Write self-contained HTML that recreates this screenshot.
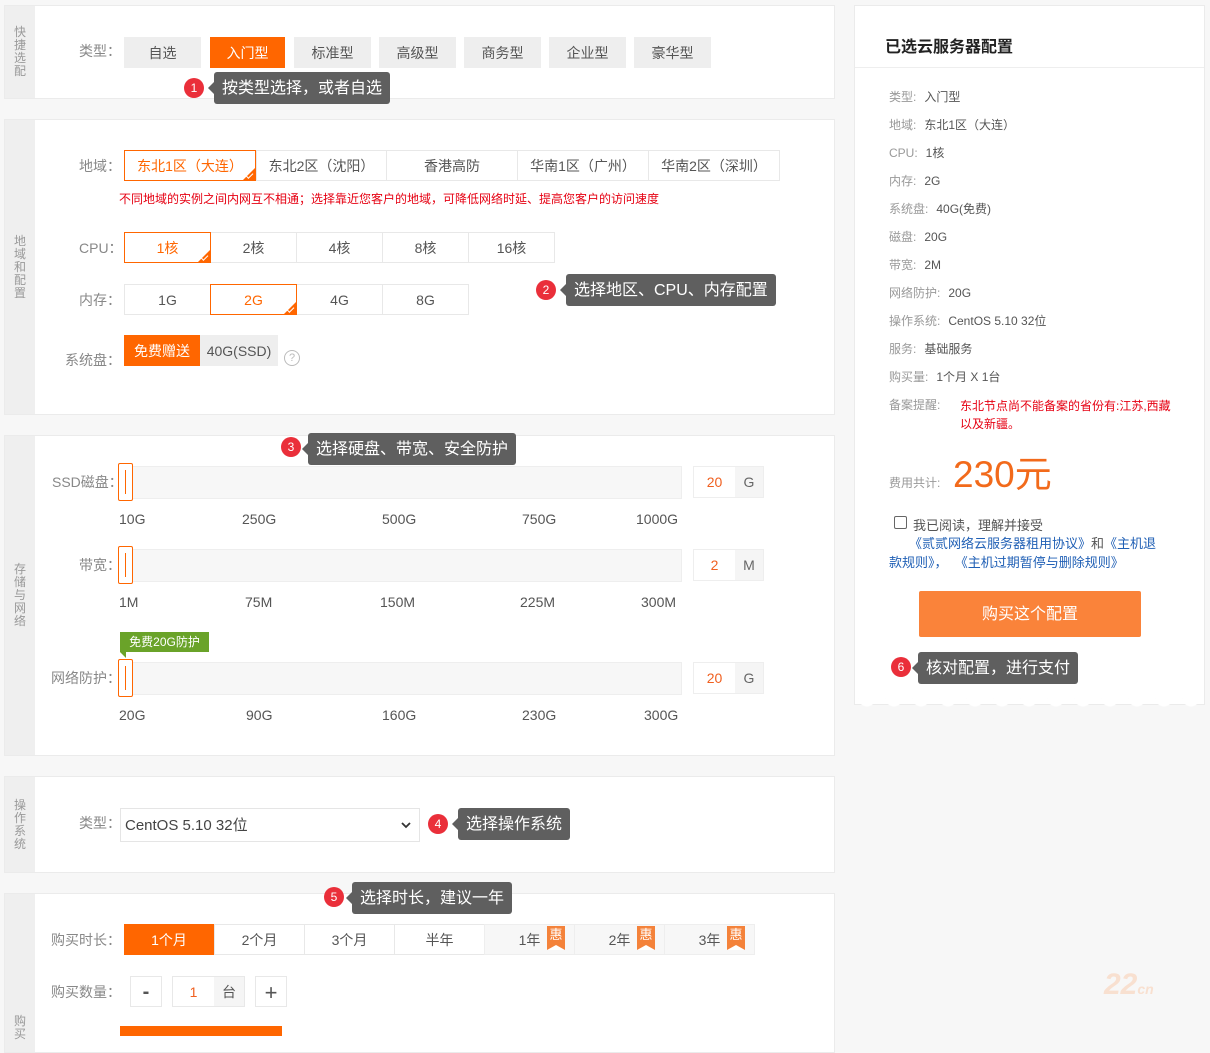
<!DOCTYPE html>
<html><head><meta charset="utf-8"><style>
*{margin:0;padding:0;box-sizing:border-box}
body{width:1210px;height:1032px;background:#f7f7f7;font-family:"Liberation Sans","Noto Sans CJK SC",sans-serif;position:relative;overflow:hidden;color:#555;font-size:14px}
.a{position:absolute}
.pn{position:absolute;left:4px;width:831px;background:#fff;border:1px solid #ebebeb}
.side{position:absolute;left:0;top:0;bottom:0;width:30px;background:#efefef;color:#999;font-size:12px;line-height:13px;display:flex;align-items:center;justify-content:center;text-align:center}
.side span{width:13px}
.lb{position:absolute;color:#888;font-size:14px;line-height:20px}
.b{position:absolute;height:31px;line-height:31px;text-align:center;font-size:14px;color:#555;border:1px solid #e8e8e8;background:#fff}
.g{background:#eee;border-color:#eee;color:#555}
.o{background:#ff6600;border-color:#ff6600;color:#fff}
.s{border-color:#ff6600;color:#ff6600;z-index:2}
.s:after{content:"";position:absolute;right:-1px;bottom:-1px;border-style:solid;border-width:0 0 14px 14px;border-color:transparent transparent #ff6600 transparent}
.s:before{content:"";position:absolute;right:2px;bottom:3px;width:6px;height:3px;border-left:1.5px solid #fff;border-bottom:1.5px solid #fff;transform:rotate(-45deg);z-index:3}
.bd{position:absolute;width:20px;height:20px;border-radius:50%;background:#ea2f3a;color:#fff;font-size:12px;line-height:20px;text-align:center}
.tp{position:absolute;height:32px;background:#5f5f5f;color:#fff;font-size:16px;line-height:34px;padding:0 8px;border-radius:3px;white-space:nowrap}
.tp:before{content:"";position:absolute;left:-6px;top:10px;border-style:solid;border-width:6px 6px 6px 0;border-color:transparent #5f5f5f transparent transparent}
.tr{position:absolute;left:118px;width:564px;height:33px;background:#f7f7f7;border:1px solid #eee}
.hd{position:absolute;left:118px;width:15px;height:38px;border:1px solid #ff6600;background:#fff;border-radius:2px}
.hd:after{content:"";position:absolute;left:6px;top:6px;width:1px;height:24px;background:#ff6600}
.sc{position:absolute;font-size:14px;color:#555}
.nb{position:absolute;left:693px;width:71px;height:32px;border:1px solid #eee;font-size:14px}
.nb i{font-style:normal;position:absolute;left:0;width:41px;text-align:center;line-height:30px;color:#f06020}
.nb u{text-decoration:none;position:absolute;left:41px;width:28px;height:30px;background:#f5f5f5;text-align:center;line-height:30px;color:#666}
.ri{position:absolute;left:889px;font-size:12px;color:#555;line-height:16px}
.ri b{font-weight:normal;color:#999;margin-right:8px}
.hui{position:absolute;top:1px;width:18px;height:24px;background:#f4823a;color:#fff;font-size:13px;line-height:18px;text-align:center}
.hui:after{content:"";position:absolute;left:0;bottom:0;border-style:solid;border-width:0 9px 5px 9px;border-color:transparent transparent #fff transparent}
</style></head><body>

<!-- panel 1 -->
<div class="pn" style="top:5px;height:94px"><div class="side"><span>快捷选配</span></div></div>
<div class="lb" style="left:79px;top:41px">类型：</div>
<div class="b g" style="left:124px;top:37px;width:77px">自选</div>
<div class="b o" style="left:210px;top:37px;width:75px">入门型</div>
<div class="b g" style="left:294px;top:37px;width:77px">标准型</div>
<div class="b g" style="left:379px;top:37px;width:77px">高级型</div>
<div class="b g" style="left:464px;top:37px;width:77px">商务型</div>
<div class="b g" style="left:549px;top:37px;width:77px">企业型</div>
<div class="b g" style="left:634px;top:37px;width:77px">豪华型</div>
<div class="bd" style="left:184px;top:78px">1</div>
<div class="tp" style="left:214px;top:72px">按类型选择，或者自选</div>

<!-- panel 2 -->
<div class="pn" style="top:119px;height:296px"><div class="side"><span>地域和配置</span></div></div>
<div class="lb" style="left:79px;top:156px">地域：</div>
<div class="b s" style="left:124px;top:150px;width:132px">东北1区（大连）</div>
<div class="b" style="left:256px;top:150px;width:131px">东北2区（沈阳）</div>
<div class="b" style="left:386px;top:150px;width:132px">香港高防</div>
<div class="b" style="left:517px;top:150px;width:132px">华南1区（广州）</div>
<div class="b" style="left:648px;top:150px;width:132px">华南2区（深圳）</div>
<div class="a" style="left:119px;top:190px;font-size:12px;color:#e60012">不同地域的实例之间内网互不相通；选择靠近您客户的地域，可降低网络时延、提高您客户的访问速度</div>
<div class="lb" style="left:79px;top:238px">CPU：</div>
<div class="b s" style="left:124px;top:232px;width:87px">1核</div>
<div class="b" style="left:210px;top:232px;width:87px">2核</div>
<div class="b" style="left:296px;top:232px;width:87px">4核</div>
<div class="b" style="left:382px;top:232px;width:87px">8核</div>
<div class="b" style="left:468px;top:232px;width:87px">16核</div>
<div class="lb" style="left:79px;top:290px">内存：</div>
<div class="b" style="left:124px;top:284px;width:87px">1G</div>
<div class="b s" style="left:210px;top:284px;width:87px">2G</div>
<div class="b" style="left:296px;top:284px;width:87px">4G</div>
<div class="b" style="left:382px;top:284px;width:87px">8G</div>
<div class="bd" style="left:536px;top:280px">2</div>
<div class="tp" style="left:566px;top:274px">选择地区、CPU、内存配置</div>
<div class="lb" style="left:65px;top:350px">系统盘：</div>
<div class="b o" style="left:124px;top:335px;width:76px">免费赠送</div>
<div class="b g" style="left:200px;top:335px;width:78px">40G(SSD)</div>
<div class="a" style="left:284px;top:350px;width:16px;height:16px;border:1px solid #bbb;border-radius:50%;color:#bbb;font-size:11px;line-height:14px;text-align:center">?</div>

<!-- panel 3 -->
<div class="pn" style="top:435px;height:321px"><div class="side"><span>存储与网络</span></div></div>
<div class="bd" style="left:281px;top:437px">3</div>
<div class="tp" style="left:308px;top:433px">选择硬盘、带宽、安全防护</div>
<div class="lb" style="left:52px;top:472px">SSD磁盘：</div>
<div class="tr" style="top:466px"></div><div class="hd" style="top:463px"></div>
<div class="nb" style="top:466px"><i>20</i><u>G</u></div>
<div class="sc" style="left:119px;top:511px">10G</div><div class="sc" style="left:242px;top:511px">250G</div><div class="sc" style="left:382px;top:511px">500G</div><div class="sc" style="left:522px;top:511px">750G</div><div class="sc" style="left:636px;top:511px">1000G</div>
<div class="lb" style="left:79px;top:555px">带宽：</div>
<div class="tr" style="top:549px"></div><div class="hd" style="top:546px"></div>
<div class="nb" style="top:549px"><i>2</i><u>M</u></div>
<div class="sc" style="left:119px;top:594px">1M</div><div class="sc" style="left:245px;top:594px">75M</div><div class="sc" style="left:380px;top:594px">150M</div><div class="sc" style="left:520px;top:594px">225M</div><div class="sc" style="left:641px;top:594px">300M</div>
<div class="a" style="left:120px;top:632px;width:89px;height:20px;background:#6aa329;color:#fff;font-size:12px;line-height:20px;text-align:center">免费20G防护</div>
<div class="a" style="left:120px;top:652px;border-style:solid;border-width:0 6px 6px 0;border-color:transparent #6aa329 transparent transparent"></div>
<div class="lb" style="left:51px;top:668px">网络防护：</div>
<div class="tr" style="top:662px"></div><div class="hd" style="top:659px"></div>
<div class="nb" style="top:662px"><i>20</i><u>G</u></div>
<div class="sc" style="left:119px;top:707px">20G</div><div class="sc" style="left:246px;top:707px">90G</div><div class="sc" style="left:382px;top:707px">160G</div><div class="sc" style="left:522px;top:707px">230G</div><div class="sc" style="left:644px;top:707px">300G</div>

<!-- panel 4 -->
<div class="pn" style="top:776px;height:97px"><div class="side"><span>操作系统</span></div></div>
<div class="lb" style="left:79px;top:813px">类型：</div>
<div class="a" style="left:120px;top:808px;width:300px;height:34px;border:1px solid #e5e5e5;font-size:15px;color:#444;line-height:34px;padding-left:4px">CentOS 5.10 32位<svg style="position:absolute;right:8px;top:13px" width="10" height="7" viewBox="0 0 10 7"><path d="M1 1L5 5L9 1" fill="none" stroke="#333" stroke-width="1.8"/></svg></div>
<div class="bd" style="left:428px;top:814px">4</div>
<div class="tp" style="left:458px;top:808px">选择操作系统</div>

<!-- panel 5 -->
<div class="pn" style="top:893px;height:160px"><div class="side"><span style="padding-top:110px">购买</span></div></div>
<div class="bd" style="left:324px;top:887px">5</div>
<div class="tp" style="left:352px;top:882px">选择时长，建议一年</div>
<div class="lb" style="left:51px;top:930px">购买时长：</div>
<div class="b o" style="left:124px;top:924px;width:90px">1个月</div>
<div class="b" style="left:214px;top:924px;width:91px">2个月</div>
<div class="b" style="left:304px;top:924px;width:91px">3个月</div>
<div class="b" style="left:394px;top:924px;width:91px">半年</div>
<div class="b g" style="left:484px;top:924px;width:91px;background:#f7f7f7;border-color:#eee">1年<div class="hui" style="left:62px">惠</div></div>
<div class="b g" style="left:574px;top:924px;width:91px;background:#f7f7f7;border-color:#eee">2年<div class="hui" style="left:62px">惠</div></div>
<div class="b g" style="left:664px;top:924px;width:91px;background:#f7f7f7;border-color:#eee">3年<div class="hui" style="left:62px">惠</div></div>
<div class="lb" style="left:51px;top:982px">购买数量：</div>
<div class="b" style="left:130px;top:976px;width:32px;font-size:20px;font-weight:bold;color:#555">-</div>
<div class="b" style="left:172px;top:976px;width:73px;padding-right:30px;color:#f06020">1<span style="position:absolute;right:0;top:0;width:30px;height:29px;background:#f5f5f5;color:#555">台</span></div>
<div class="b" style="left:255px;top:976px;width:32px;font-size:22px;color:#555">+</div>
<div class="a" style="left:120px;top:1026px;width:162px;height:10px;background:#ff6600"></div>

<!-- right panel -->
<div class="a" style="left:854px;top:5px;width:351px;height:700px;background:#fff;border:1px solid #ebebeb"></div>
<div class="a" style="left:854px;top:698px;width:351px;height:14px;background:radial-gradient(circle at 13px 0,#fff 8px,transparent 9px) 0 0/27px 14px repeat-x"></div>
<div class="a" style="left:885px;top:33px;font-size:16px;font-weight:bold;color:#222">已选云服务器配置</div>
<div class="a" style="left:855px;top:67px;width:349px;height:1px;background:#eee"></div>
<div class="ri" style="top:89px"><b>类型:</b>入门型</div>
<div class="ri" style="top:117px"><b>地域:</b>东北1区（大连）</div>
<div class="ri" style="top:145px"><b>CPU:</b>1核</div>
<div class="ri" style="top:173px"><b>内存:</b>2G</div>
<div class="ri" style="top:201px"><b>系统盘:</b>40G(免费)</div>
<div class="ri" style="top:229px"><b>磁盘:</b>20G</div>
<div class="ri" style="top:257px"><b>带宽:</b>2M</div>
<div class="ri" style="top:285px"><b>网络防护:</b>20G</div>
<div class="ri" style="top:313px"><b>操作系统:</b>CentOS 5.10 32位</div>
<div class="ri" style="top:341px"><b>服务:</b>基础服务</div>
<div class="ri" style="top:369px"><b>购买量:</b>1个月 X 1台</div>
<div class="ri" style="top:397px"><b>备案提醒:</b></div>
<div class="a" style="left:960px;top:397px;width:215px;font-size:12px;line-height:18px;color:#e60012">东北节点尚不能备案的省份有:江苏,西藏以及新疆。</div>
<div class="ri" style="top:475px"><b>费用共计:</b></div>
<div class="a" style="left:953px;top:451px;font-size:37px;color:#f26a1b;line-height:48px">230元</div>
<div class="a" style="left:894px;top:516px;width:13px;height:13px;border:1px solid #666;border-radius:2px"></div>
<div class="a" style="left:913px;top:515px;font-size:13px;color:#555">我已阅读，理解并接受</div>
<div class="a" style="left:889px;top:534px;width:275px;font-size:13px;line-height:19px;color:#1f5fb5;text-indent:20px">《贰贰网络云服务器租用协议》<span style="color:#555">和</span>《主机退款规则》，&nbsp;&nbsp;《主机过期暂停与删除规则》</div>
<div class="a" style="left:919px;top:591px;width:222px;height:46px;background:#fa833a;border-radius:2px;color:#fff;font-size:16px;line-height:48px;text-align:center">购买这个配置</div>
<div class="bd" style="left:891px;top:657px">6</div>
<div class="tp" style="left:918px;top:652px">核对配置，进行支付</div>
<div class="a" style="left:1104px;top:968px;font-size:30px;font-weight:bold;font-style:italic;color:#f8e0d0">22<span style="font-size:14px">cn</span></div>
</body></html>
